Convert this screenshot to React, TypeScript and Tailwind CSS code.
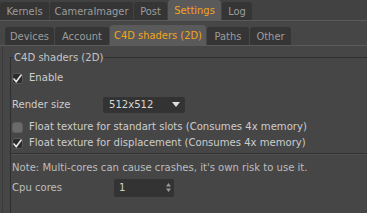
import React from "react";

const topTabs = [
  { label: "Kernels", w: "w-[49px]" },
  { label: "CameraImager", w: "w-[83px]" },
  { label: "Post", w: "w-[33px]" },
  { label: "Settings", w: "w-[53px]", active: true },
  { label: "Log", w: "w-[30px]" },
];

const subTabs = [
  { label: "Devices", w: "w-[49px]" },
  { label: "Account", w: "w-[54px]" },
  { label: "C4D shaders (2D)", w: "w-[96px]", active: true },
  { label: "Paths", w: "w-[42px]" },
  { label: "Other", w: "w-[41px]" },
];

function Tab({ label, w, active }: { label: string; w: string; active?: boolean }) {
  return (
    <div
      className={`${w} flex items-center justify-center rounded-t-[3px] ${
        active ? "h-full bg-[#5a5a5a] text-[#f4a41c]" : "h-[calc(100%-2px)] bg-[#353535] text-[#9c9c9c]"
      }`}
    >
      {label}
    </div>
  );
}

function Check({ checked }: { checked?: boolean }) {
  if (!checked)
    return <span className="w-[11px] h-[11px] rounded-[3px] bg-[#6b6b6b] border border-[#5e5e5e]" />;
  return (
    <span className="w-[11px] h-[11px] rounded-[3px] bg-[#2b2b2b] border border-[#5a5a5a] flex items-center justify-center">
      <svg width="9" height="9" viewBox="0 0 9 9">
        <path d="M1 5 L3.2 7.8 L8 1.2" fill="none" stroke="#e6e6e6" strokeWidth="1.6" strokeLinecap="round" strokeLinejoin="round" />
      </svg>
    </span>
  );
}

export default function App() {
  return (
    <div className="w-[367px] h-[213px] overflow-hidden bg-[#464646] font-['DejaVu_Sans_Condensed','DejaVu_Sans',sans-serif] [font-stretch:condensed] text-[11px] leading-none select-none">
      {/* top tabs */}
      <div className="h-[21px] bg-[#424242] border-b border-[#5a5a5a] flex items-end gap-[1px]">
        {topTabs.map((t) => (
          <Tab key={t.label} {...t} />
        ))}
      </div>

      {/* sub tabs */}
      <div className="pt-[4px] pl-[5px]">
        <div className="h-[20px] flex items-end gap-[1px]">
          {subTabs.map((t) => (
            <Tab key={t.label} {...t} />
          ))}
        </div>
      </div>
      <div className="h-[1px] bg-[#5a5a5a]" />

      {/* panel */}
      <div className="ml-[2px] border-l border-[#3a3a3a] h-full pl-[7px] pt-[5px]">
        <fieldset className="border-t border-l border-[#2f2f2f] h-full text-[11.2px] text-[#cdcdcd]">
          <legend className="ml-[2px] px-[1px] leading-[13px] text-[#c4c4c4]">C4D shaders (2D)</legend>
          <div className="pl-[1px] pt-[6px]">
            <div className="h-[16px] flex items-center gap-[6px]">
              <Check checked />
              <span>Enable</span>
            </div>
            <div className="mt-[10px] h-[17px] flex items-center">
              <span className="w-[91px]">Render size</span>
              <div className="w-[82px] h-[16px] rounded-[2px] bg-[#333333] flex items-center justify-between pl-[6px] pr-[5px] text-[#d8d8d8]">
                <span>512x512</span>
                <svg width="8" height="5" viewBox="0 0 8 5">
                  <path d="M0 0 H8 L4 5 Z" fill="#e0e0e0" />
                </svg>
              </div>
            </div>
            <div className="mt-[6px] h-[16px] flex items-center gap-[6px]">
              <Check />
              <span>Float texture for standart slots (Consumes 4x memory)</span>
            </div>
            <div className="h-[16px] flex items-center gap-[6px]">
              <Check checked />
              <span>Float texture for displacement (Consumes 4x memory)</span>
            </div>
          </div>
          <div className="mt-[2px] h-[2px] border-t border-[#333333] bg-[#505050]" />
          <div className="pl-[1px] pt-[5px] text-[#bdbdbd]">
            <div className="h-[16px] flex items-center">Note: Multi-cores can cause crashes, it's own risk to use it.</div>
            <div className="mt-[2px] h-[19px] flex items-center">
              <span className="w-[102px]">Cpu cores</span>
              <div className="w-[60px] h-[18px] rounded-[2px] bg-[#333333] flex items-center justify-between pl-[5px] pr-[3px] text-[#cfcfcf]">
                <span>1</span>
                <svg width="5" height="9" viewBox="0 0 5 9">
                  <path d="M0 3.5 L2.5 0 L5 3.5 Z M0 5.5 L2.5 9 L5 5.5 Z" fill="#9a9a9a" />
                </svg>
              </div>
            </div>
          </div>
        </fieldset>
      </div>
    </div>
  );
}
